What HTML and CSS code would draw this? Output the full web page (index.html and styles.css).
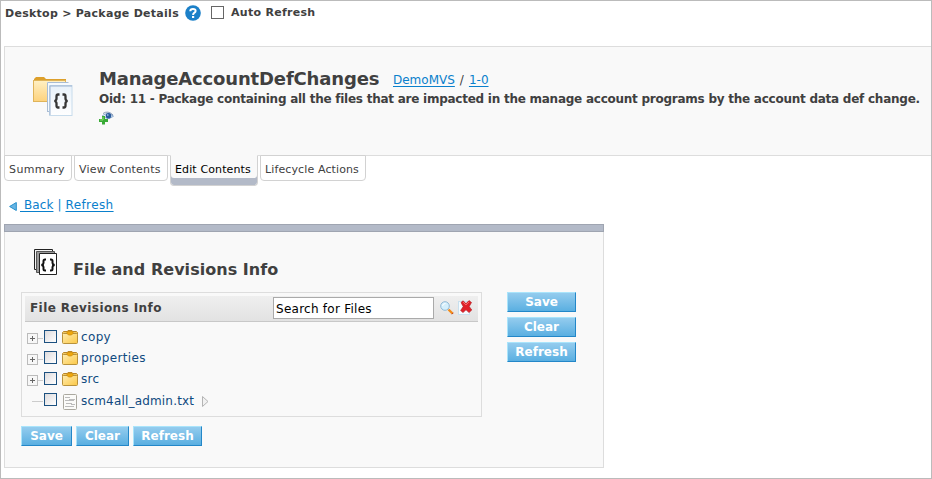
FILE: index.html
```html
<!DOCTYPE html>
<html lang="en">
<head>
<meta charset="utf-8">
<title>Package Details</title>
<link rel="stylesheet" href="styles.css">
</head>
<body>
<svg class="defs" width="0" height="0">
  <defs>
    <linearGradient id="gold" x1="0" y1="0" x2="1" y2="1"><stop offset="0" stop-color="#ffecb0"/><stop offset="1" stop-color="#fbc846"/></linearGradient>
    <linearGradient id="manila" x1="0" y1="0" x2="0" y2="1"><stop offset="0" stop-color="#fff0c4"/><stop offset="1" stop-color="#fdd27c"/></linearGradient>
    <linearGradient id="paper" x1="0" y1="0" x2="0" y2="1"><stop offset="0" stop-color="#e8f1fa"/><stop offset="1" stop-color="#fff"/></linearGradient>
    <symbol id="folder" viewBox="0 0 16 14">
      <path d="M.5 4.5V2.500L1.500 1.500H5L6 .5H10L11 1.500H14.500L15.500 2.500V4.500Z" fill="#f0c860" stroke="#b8862a"/>
      <rect x=".5" y="3.500" width="15" height="10" rx="1" fill="url(#gold)" stroke="#b8923c"/>
      <path d="M5 1.500H11V3.500L9.500 5H6.500L5 3.500Z" fill="#efa80c" stroke="#c98a10" stroke-width=".7"/>
    </symbol>
  </defs>
</svg>
<div class="page">
  <header class="topbar">
    <span class="crumbs">Desktop &gt; Package Details</span>
    <svg class="help" width="16" height="16" viewBox="0 0 16 16"><circle cx="8" cy="8" r="7.800" fill="#1c80c8"/><path d="M5.300 6.200Q5.300 3.900 8 3.900T10.600 6Q10.600 7.100 9.200 7.900Q8.100 8.500 8.100 9.900" fill="none" stroke="#fff" stroke-width="2"/><rect x="7" y="11" width="2.200" height="2" fill="#fff"/></svg>
    <span class="check"></span>
    <span class="auto">Auto Refresh</span>
  </header>

  <section class="package">
    <svg class="package-icon" width="40" height="42" viewBox="0 0 40 42">
      <path d="M1 3 3 1H11L13 3H33V6H1Z" fill="#dda02c"/>
      <rect x=".5" y="4.500" width="32" height="21" fill="url(#manila)" stroke="#dfb45a"/>
      <rect x="14" y="6" width="22" height="30" fill="#f6fafd"/>
      <path d="M14.500 35.500V6.500H35.500M17 35.500H14" fill="none" stroke="#a9bdd5"/>
      <rect x="16.500" y="9.500" width="22.500" height="30" fill="url(#paper)" stroke="#c8dcec"/>
      <path d="M17 39V10H39" fill="none" stroke="#9db3d0"/>
      <path d="M26.500 18.500H25Q23.500 18.500 23.500 20.500V22.500Q23.500 24.500 21.500 25Q23.500 25.500 23.500 27.500V29.500Q23.500 31.500 25 31.500H26.500M29.500 18.500H31Q32.500 18.500 32.500 20.500V22.500Q32.500 24.500 34.500 25Q32.500 25.500 32.500 27.500V29.500Q32.500 31.500 31 31.500H29.500" fill="none" stroke="#363636" stroke-width="2.300"/>
    </svg>
    <div class="package-info">
      <div class="title-row"><h1>ManageAccountDefChanges</h1><span class="path"><a>DemoMVS</a> / <a>1-0</a></span></div>
      <p class="desc">Oid: 11 - Package containing all the files that are impacted in the manage account programs by the account data def change.</p>
      <svg class="watch" width="16" height="14" viewBox="0 0 16 14"><path d="M3 5Q9 0 14.500 5.200Q9 9 5 6" fill="#e8f1fb" stroke="#8eabcc"/><path d="M4 2.500Q9-1 14 4" fill="none" stroke="#8798b5"/><circle cx="9.500" cy="4.800" r="2.800" fill="#285a9c"/><circle cx="8.800" cy="4" r=".8" fill="#bdd9f8"/><path d="M3 5H6V8H9V11H6V13.500H3V11H0V8H3Z" fill="#39aa36"/><path d="M4 6V9H1" fill="none" stroke="#8bdc74"/></svg>
    </div>
  </section>

  <nav class="tabs">
    <a class="tab summary">Summary</a>
    <a class="tab view">View Contents</a>
    <a class="tab edit active">Edit Contents</a>
    <a class="tab life">Lifecycle Actions</a>
  </nav>

  <div class="links">
    <svg width="8" height="9" viewBox="0 0 8 9"><path d="M7.300.5V8.500L.6 4.500Z" fill="#68b5e4" stroke="#278fca"/></svg>
    <a class="back">&nbsp;Back</a><span class="bar">|</span><a class="reload">Refresh</a>
  </div>

  <main class="panel">
    <div class="panel-title">
      <svg width="24" height="27" viewBox="0 0 24 27"><path d="M.5.500H18.500V20.500H.5Z" fill="#f3f3f3" stroke="#222"/><path d="M2.500 2.500H20.500V23.500H2.500Z" fill="#999" stroke="#555"/><path d="M5.500 4.500H22.500V25.500H5.500Z" fill="#fff" stroke="#222"/><path d="M12 10.500H11Q9.500 10.500 9.500 12V14Q9.500 15.500 7.500 16Q9.500 16.500 9.500 18V20Q9.500 21.500 11 21.500H12M16 10.500H17Q18.500 10.500 18.500 12V14Q18.500 15.500 20.500 16Q18.500 16.500 18.500 18V20Q18.500 21.500 17 21.500H16" fill="none" stroke="#111" stroke-width="2"/></svg>
      <h2>File and Revisions Info</h2>
    </div>
    <div class="columns">
      <div class="files">
        <div class="files-head">
          <h3>File Revisions Info</h3>
          <span class="search">Search for Files</span>
          <svg class="lens" width="14" height="14" viewBox="0 0 14 14"><path d="M8.500 8.500 12.500 12.500" stroke="#f28a18" stroke-width="2.400"/><path d="M12 13.200 13.400 11.800" stroke="#b42c18"/><circle cx="5" cy="5" r="4.300" fill="#d4effc" stroke="#91b9d4"/><path d="M2.500 5Q3 2.500 5.500 2.500" fill="none" stroke="#fff"/></svg>
          <svg class="remove" width="15" height="15" viewBox="0 0 15 15"><rect x=".5" y="1.500" width="11" height="13" fill="#f5fbff" stroke="#c9e0ee"/><path d="M3 2.500 5 .8 8 3.600 11 .6 13.500 2.500 11.200 6.500 13.800 10 11 12.600 8 9.800 5 12.600 2.600 10.500 5.200 6.600Z" fill="#e0212a" stroke="#b01c20" stroke-width=".6"/><path d="M5 2 8 5 11 2" fill="none" stroke="#f46868"/></svg>
        </div>
        <ul class="tree">
          <li><span class="plus"></span><span class="node"></span><svg class="folder" width="16" height="14"><use href="#folder"/></svg><span class="name">copy</span></li>
          <li><span class="plus"></span><span class="node"></span><svg class="folder" width="16" height="14"><use href="#folder"/></svg><span class="name">properties</span></li>
          <li><span class="plus"></span><span class="node"></span><svg class="folder" width="16" height="14"><use href="#folder"/></svg><span class="name">src</span></li>
          <li><span class="leaf"></span><span class="node"></span><svg class="file" width="14" height="16" viewBox="0 0 14 16"><rect x=".5" y=".5" width="13" height="15" rx="1" fill="#fbfbf9" stroke="#aaa89f"/><path d="M2 3.500H7M6 5.500H12M2 6.500H11M3 9.500H9M8 10.500H12M2 12.500H11" stroke="#bbb"/></svg><span class="txt">scm4all_admin.txt</span><svg class="more" width="7" height="11" viewBox="0 0 7 11"><path d="M.5.500V10.500L6 5.500Z" fill="#f1f1f1" stroke="#b4b4b4"/></svg></li>
        </ul>
      </div>
      <div class="side">
        <button>Save</button><button>Clear</button><button>Refresh</button>
      </div>
    </div>
    <div class="bottom">
      <button class="b-save">Save</button><button class="b-clear">Clear</button><button class="b-refresh">Refresh</button>
    </div>
  </main>
</div>
</body>
</html>
```
FILE: styles.css
```css
*, *::before, *::after { box-sizing: border-box; }
body { margin: 0; background: #fff; color: #404040; font: 13px/16px Verdana, "DejaVu Sans", sans-serif; white-space: nowrap; overflow: hidden; }
svg { display: block; flex: none; }
.defs { position: absolute; }
h1, h2, h3, p, ul { margin: 0; padding: 0; }
a { color: #0a80cc; text-decoration: underline; text-underline-offset: 2px; }
.page { width: 932px; height: 479px; border: 1px solid #bbb; padding-left: 3px; }

.topbar { height: 45px; display: flex; align-items: flex-start; padding-top: 4px; font-size: 11px; font-weight: bold; letter-spacing: .28px; }
.crumbs { width: 181px; padding: 1px 0 0 1px; }
.check { width: 13px; height: 13px; margin: 1px 7px 0 10px; border: 1px solid #666; background: #fff; }

.package { height: 110px; border: 1px solid #ddd; border-right: 0; background: #f9f9f9; display: flex; padding-left: 28px; }
.package-icon { margin-top: 29px; }
.package-info { margin-left: 26px; padding-top: 20px; }
.title-row { display: flex; height: 24px; }
h1 { width: 294px; font-size: 18px; line-height: 23px; letter-spacing: -.15px; }
.path { font-size: 12px; line-height: 27px; word-spacing: 1.2px; }
.desc { font-size: 12px; font-weight: bold; line-height: 16px; letter-spacing: -.25px; }
.watch { margin-top: 4px; }

.tabs { display: flex; gap: 2px; height: 32px; margin-top: -1px; }
.tab { height: 26px; padding: 6px 0 0 4px; border: 1px solid #d2d2d2; border-radius: 0 0 4px 4px; background: #fff; color: #404040; font-size: 11px; letter-spacing: .2px; text-decoration: none; }
.summary { width: 68px; letter-spacing: .4px; }
.view { width: 94px; }
.edit { width: 88px; }
.life { width: 106px; letter-spacing: .12px; }
.tab.active { height: 31px; background: #f9f9f9; border-top-color: #f9f9f9; color: #000; letter-spacing: .12px; box-shadow: inset 0 -7px #b3bac8; }

.links { height: 37px; display: flex; padding: 10px 0 0 5px; font-size: 12px; }
.links svg { margin: 5px 3px 0 0; }
.back { letter-spacing: .1px; }
.bar { width: 12px; text-align: center; color: #0a80cc; }
.reload { letter-spacing: .4px; }

.panel { width: 600px; height: 244px; border: 1px solid #ddd; border-top: 0; background: #f9f9f9; padding-left: 16px; }
.panel::before { content: ""; display: block; height: 8px; margin: 0 -1px 0 -17px; background: #b3bac8; border: 1px solid #9fa5b1; }
.panel-title { display: flex; height: 60px; padding: 17px 0 0 13px; }
h2 { margin: 11px 0 0 15px; font-size: 16px; line-height: 20px; letter-spacing: .04px; }
.columns { display: flex; }
.files { width: 461px; height: 125px; border: 1px solid #ddd; padding: 3px 3px 0; }
.files-head { height: 26px; display: flex; background: linear-gradient(#efefef, #e2e2e2); border-bottom: 1px solid #c8c8c8; }
h3 { width: 248px; padding: 4px 0 0 5px; font-size: 12px; line-height: 16px; letter-spacing: .42px; }
.search { width: 161px; height: 22px; margin-top: 1px; padding: 3px 2px 0; border: 1px solid #aaa; background: #fff; color: #000; font-size: 12px; line-height: 16px; letter-spacing: .26px; }
.lens { margin: 5px 0 0 6px; }
.remove { margin: 4px 0 0 4px; }

.tree { list-style: none; padding: 4px 0 0 2px; color: #104a80; font-size: 12px; }
.tree li { display: flex; height: 21px; line-height: 22px; }
.plus, .leaf { position: relative; width: 17px; flex: none; }
.plus::before { content: ""; position: absolute; left: 0; top: 7px; width: 11px; height: 11px; border: 1px solid #bbb; background: linear-gradient(#666, #666) 2px 4px / 5px 1px no-repeat, linear-gradient(#666, #666) 4px 2px / 1px 5px no-repeat, #f7f7f7; }
.plus::after, .leaf::after { content: ""; position: absolute; left: 11px; right: 1px; top: 12px; height: 1px; background: #ccc; }
.leaf::after { left: 5px; }
.node { width: 13px; height: 13px; margin-top: 4px; flex: none; border: 1px solid #1c5180; background: linear-gradient(135deg, #dddbdd, #fff); }
.folder { margin: 4px 3px 0 5px; }
.name { letter-spacing: .35px; }
.file { margin: 5px 4px 0 6px; }
.txt { letter-spacing: .18px; line-height: 24px; }
.more { margin: 7px 0 0 8px; }

.side { margin-left: 25px; display: flex; flex-direction: column; gap: 5px; }
button { width: 69px; height: 20px; padding: 0; border: 1px solid; border-color: #a9e4fb #2387c8 #2387c8 #a9e4fb; background: linear-gradient(#94ccee, #5aafe1); color: #fff; font: bold 12px/16px Verdana, "DejaVu Sans", sans-serif; }
.bottom { display: flex; gap: 4px; margin-top: 9px; }
.b-save { width: 51px; }
.b-clear { width: 53px; }
```
